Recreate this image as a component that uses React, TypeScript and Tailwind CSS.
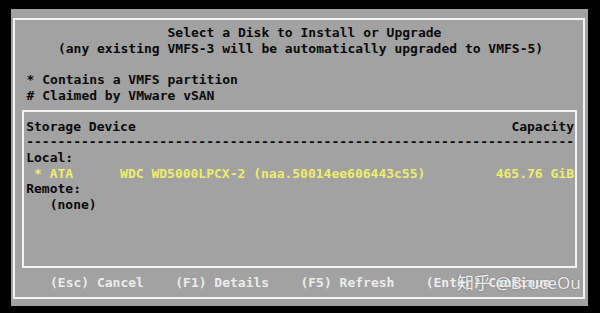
const mono = { fontFamily: '"DejaVu Sans Mono", "Liberation Mono", monospace' };

export default function App() {
  return (
    <div className="relative w-[600px] h-[313px] bg-black pt-[9px] pl-[11px] overflow-hidden">
      {/* grey console panel */}
      <div
        className="w-[577px] h-[297px] bg-[#a2a2a2] pt-[9px] pl-[2px] text-[13px] leading-[15.6px] text-[#0a0a0a] font-bold"
        style={mono}
      >
        {/* outer frame */}
        <div className="w-[572px] h-[281px] border-2 border-[#f4f4f4] flex flex-col">
          {/* heading */}
          <div className="pt-[5.2px] pl-[11.6px] whitespace-pre">
            <div>{'                  Select a Disk to Install or Upgrade'}</div>
            <div>{'    (any existing VMFS-3 will be automatically upgraded to VMFS-5)'}</div>
            <div>{' '}</div>
            <div>* Contains a VMFS partition</div>
            <div># Claimed by VMware vSAN</div>
          </div>

          {/* disk list */}
          <div className="mt-[6.8px] ml-[7px] w-[555px] h-[158px] border-2 border-[#f4f4f4] pt-[6.8px] pl-[2.2px] pr-[1px] whitespace-pre">
            <div className="flex justify-between">
              <span>Storage Device</span>
              <span>Capacity</span>
            </div>
            <div>{'-'.repeat(70)}</div>
            <div>Local:</div>
            <div className="flex justify-between text-[#eeee6a]">
              <span>{' * ATA      WDC WD5000LPCX-2 (naa.50014ee606443c55)'}</span>
              <span>465.76 GiB</span>
            </div>
            <div>Remote:</div>
            <div>{'   (none)'}</div>
          </div>

          {/* key hints */}
          <div className="mt-[6.8px] pl-[35px] whitespace-pre text-[#ececec]">
            {'(Esc) Cancel    (F1) Details    (F5) Refresh    (Enter) Continue'}
          </div>
        </div>
      </div>

      {/* watermark */}
      <div
        className="absolute left-[457px] top-[272px] text-[17px] leading-[22px] text-white/85 whitespace-nowrap"
        style={{ fontFamily: '"Noto Sans", "Noto Sans CJK SC", sans-serif', textShadow: '0 0 2px rgba(0,0,0,0.35)' }}
      >
        知乎 @BruceOu
      </div>
    </div>
  );
}
